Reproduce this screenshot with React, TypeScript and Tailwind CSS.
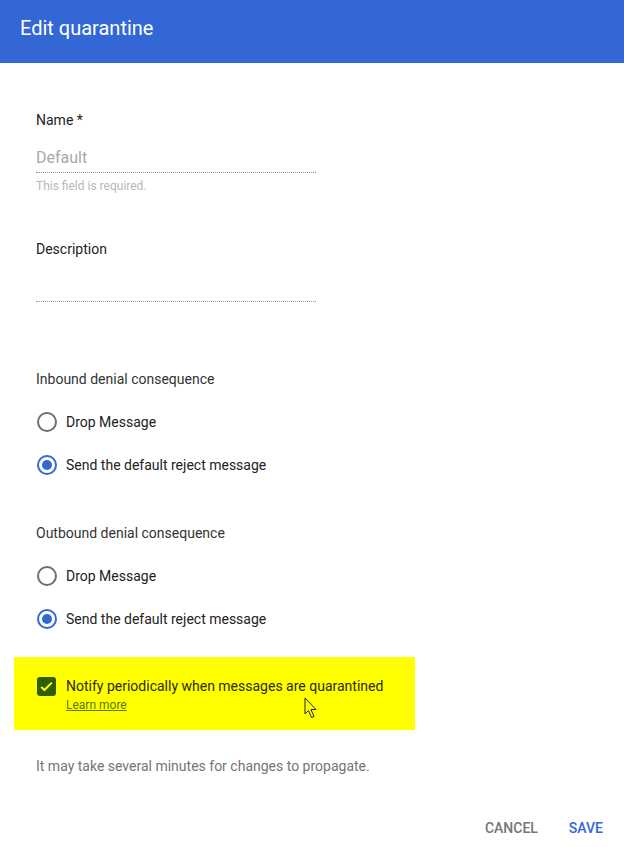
import React from 'react';

const font = { fontFamily: 'Roboto, "Liberation Sans", sans-serif' };

function Radio({ checked, label }: { checked?: boolean; label: string }) {
  return (
    <div className="flex items-center h-5">
      <div
        className={
          'w-5 h-5 rounded-full border-2 flex items-center justify-center ml-px ' +
          (checked ? 'border-[#3367d6]' : 'border-[#6f6f6f]')
        }
      >
        {checked && <div className="w-2.5 h-2.5 rounded-full bg-[#3367d6]" />}
      </div>
      <span className="ml-[9px] text-[14px] leading-5 text-[#222]">{label}</span>
    </div>
  );
}

export default function App() {
  return (
    <div className="w-[624px] h-[847px] bg-white relative overflow-hidden" style={font}>
      <div className="h-[63px] bg-[#3367d6] px-5 pt-[15px]">
        <h1 className="text-[20px] leading-[26px] text-white">Edit quarantine</h1>
      </div>

      <div className="px-9">
        <div className="mt-[47px] text-[14px] leading-5 text-[#222]">Name *</div>
        <div className="mt-4 w-[280px] h-[27px] border-b border-dotted border-[#8a8a8a]">
          <span className="text-[16px] leading-6 text-[#a8a8a8]">Default</span>
        </div>
        <div className="mt-[5px] text-[12px] leading-4 text-[#b8b8b8]">This field is required.</div>

        <div className="mt-[45px] text-[14px] leading-5 text-[#222]">Description</div>
        <div className="mt-4 w-[280px] h-[27px] border-b border-dotted border-[#9a9a9a]" />

        <div className="mt-[67px] text-[14px] leading-5 text-[#333]">Inbound denial consequence</div>
        <div className="mt-[23px] flex flex-col gap-[23px]">
          <Radio label="Drop Message" />
          <Radio checked label="Send the default reject message" />
        </div>

        <div className="mt-[48px] text-[14px] leading-5 text-[#333]">Outbound denial consequence</div>
        <div className="mt-[23px] flex flex-col gap-[23px]">
          <Radio label="Drop Message" />
          <Radio checked label="Send the default reject message" />
        </div>

        <div className="mt-[28px] -ml-[22px] w-[401px] bg-[#ffff00] pl-[23px] pt-[19px] pb-[17px] flex">
          <div className="w-[19px] h-[19px] mt-px rounded-[3px] bg-[#2f5e00] flex items-center justify-center">
            <svg width="17" height="17" viewBox="0 0 24 24">
              <path d="M4.5 12.5l4.5 4.5L19.5 6.5" fill="none" stroke="#ffff00" strokeWidth="2.8" />
            </svg>
          </div>
          <div className="ml-[10px]">
            <div className="text-[14px] leading-5 text-[#2a2a00]">
              Notify periodically when messages are quarantined
            </div>
            <div className="mt-px text-[12px] leading-4 text-[#567a00] underline">Learn more</div>
          </div>
        </div>

        <div className="mt-[26px] text-[14px] leading-5 text-[#757575]">
          It may take several minutes for changes to propagate.
        </div>
      </div>

      <div className="mt-[42px] flex justify-end gap-[31px] pr-[21px]">
        <span className="text-[14px] leading-5 font-medium text-[#757575]">CANCEL</span>
        <span className="text-[14px] leading-5 font-medium text-[#3367d6]">SAVE</span>
      </div>

      <svg className="absolute left-[304px] top-[697px]" width="14" height="22" viewBox="0 0 14 22">
        <path
          d="M1 1 L1 17 L4.5 13.5 L7.5 20.5 L10 19.5 L7 12.5 L12 12.5 Z"
          fill="#ffff00"
          stroke="#222"
          strokeWidth="1"
          strokeLinejoin="round"
        />
      </svg>
    </div>
  );
}
